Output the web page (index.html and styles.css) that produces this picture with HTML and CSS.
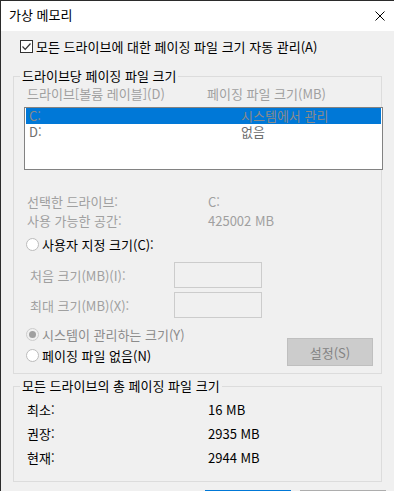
FILE: index.html
```html
<!DOCTYPE html>
<html lang="ko">
<head>
<meta charset="utf-8">
<title>가상 메모리</title>
<link rel="stylesheet" href="styles.css">
</head>
<body>
<div class="window">
  <div class="titlebar">
    <span class="title">가상 메모리</span>
    <svg class="close" width="10" height="10" viewBox="0 0 10 10"><path d="M0.5 0.5 L9.5 9.5 M9.5 0.5 L0.5 9.5" stroke="#000" stroke-width="1" fill="none"/></svg>
  </div>
  <div class="content">
    <div class="check-row">
      <span class="checkbox"><svg width="11" height="11" viewBox="0 0 11 11"><path d="M1.5 5.5 L4.2 8.3 L9.5 2.5" stroke="#333" stroke-width="1.2" fill="none"/></svg></span>
      <span class="check-label">모든 드라이브에 대한 페이징 파일 크기 자동 관리(A)</span>
    </div>

    <fieldset class="group group-drive">
      <legend>드라이브당 페이징 파일 크기</legend>
      <div class="col-headers">
        <span class="hcol1">드라이브[볼륨 레이블](D)</span>
        <span class="hcol2">페이징 파일 크기(MB)</span>
      </div>
      <div class="listbox">
        <div class="lrow selected"><span class="lcol1">C:</span><span class="lcol2">시스템에서 관리</span></div>
        <div class="lrow"><span class="lcol1">D:</span><span class="lcol2">없음</span></div>
      </div>
      <div class="info">
        <div class="info-row"><span class="info-label">선택한 드라이브:</span><span class="info-val">C:</span></div>
        <div class="info-row"><span class="info-label">사용 가능한 공간:</span><span class="info-val">425002 MB</span></div>
      </div>
      <div class="radio-row radio-custom">
        <span class="radio"></span><span class="radio-label">사용자 지정 크기(C):</span>
      </div>
      <div class="size-row size-first">
        <span class="size-label">처음 크기(MB)(I):</span><span class="input"></span>
      </div>
      <div class="size-row size-second">
        <span class="size-label">최대 크기(MB)(X):</span><span class="input"></span>
      </div>
      <div class="bottom-area">
        <div class="radios">
          <div class="radio-row"><span class="radio checked"></span><span class="radio-label disabled">시스템이 관리하는 크기(Y)</span></div>
          <div class="radio-row radio-none"><span class="radio"></span><span class="radio-label">페이징 파일 없음(N)</span></div>
        </div>
        <button class="set-btn">설정(S)</button>
      </div>
    </fieldset>

    <fieldset class="group group-total">
      <legend>모든 드라이브의 총 페이징 파일 크기</legend>
      <div class="total-row"><span class="total-label">최소:</span><span class="total-val">16 MB</span></div>
      <div class="total-row"><span class="total-label">권장:</span><span class="total-val">2935 MB</span></div>
      <div class="total-row"><span class="total-label">현재:</span><span class="total-val">2944 MB</span></div>
    </fieldset>

    <div class="footer">
      <button class="btn ok"></button>
      <button class="btn cancel"></button>
    </div>
  </div>
</div>
</body>
</html>
```

FILE: styles.css
```css
* { box-sizing: border-box; }
html, body { margin: 0; padding: 0; }
body {
  font-family: "Noto Sans CJK KR", "Noto Sans", sans-serif;
  font-size: 13px;
  color: #000;
  background: #f0f0f0;
}
.window {
  width: 394px;
  height: 491px;
  overflow: hidden;
  border-top: 1px solid #2b2b2b;
  border-left: 1px solid #2b2b2b;
  background: #f0f0f0;
}
.titlebar {
  height: 30px;
  background: #fff;
  display: flex;
  align-items: center;
  justify-content: space-between;
  padding: 0 9px 2px 8px;
}
.title { line-height: 16px; }
.close { display: block; margin-top: 2px; }

.content {
  padding-top: 9px;
}
.check-row {
  display: flex;
  align-items: center;
  height: 13px;
  margin-left: 19px;
}
.checkbox {
  width: 13px;
  height: 13px;
  border: 1px solid #333;
  background: #fff;
  display: flex;
  align-items: center;
  justify-content: center;
}
.checkbox svg { display: block; }
.check-label { margin-left: 3px; line-height: 13px; }

.group {
  margin: 15px 0 0 12px;
  width: 369px;
  border: 1px solid #dcdcdc;
  padding: 0;
  min-width: 0;
}
.group legend {
  margin-left: 6px;
  padding: 0 2px;
  line-height: 16px;
  color: #000;
}
.group-drive { padding-bottom: 7px; }

.col-headers {
  display: flex;
  line-height: 16px;
  margin-top: 2px;
  padding-left: 13px;
  color: #a0a0a0;
}
.hcol1 { width: 180px; }

.listbox {
  margin: 5px 0 0 10px;
  width: 359px;
  height: 63px;
  border: 1px solid #828282;
  background: #fff;
  padding: 0 1px;
}
.lrow {
  display: flex;
  height: 16px;
  line-height: 16px;
  padding-left: 3px;
  color: #6d6d6d;
}
.lrow.selected { background: #0078d7; color: #8a8a8a; }
.lcol1 { width: 212px; }

.info { margin-top: 22px; padding-left: 13px; color: #a0a0a0; }
.info-row { display: flex; line-height: 19px; height: 19px; }
.info-label { width: 181px; }

.radio-row {
  display: flex;
  align-items: center;
  height: 13px;
  margin-left: 12px;
}
.radio-custom { margin-top: 8px; }
.radio {
  width: 13px;
  height: 13px;
  border-radius: 50%;
  border: 1px solid #bcbcbc;
  background: #fff;
  flex: none;
  display: flex;
  align-items: center;
  justify-content: center;
}
.radio.checked { background: #f0f0f0; border-color: #cccccc; }
.radio.checked::after {
  content: "";
  width: 7px;
  height: 7px;
  border-radius: 50%;
  background: #a0a0a0;
}
.radio-label { margin-left: 3px; line-height: 13px; color: #000; }
.radio-label.disabled { color: #8c8c8c; }

.size-row {
  display: flex;
  align-items: center;
  height: 26px;
  padding-left: 16px;
  color: #a0a0a0;
}
.size-first { margin-top: 11px; }
.size-second { margin-top: 4px; }
.size-label { width: 144px; }
.input {
  width: 88px;
  height: 26px;
  border: 1px solid #cccccc;
  background: #f0f0f0;
}

.bottom-area {
  display: flex;
  margin-top: 10px;
}
.radio-none { margin-top: 8px; }
.set-btn {
  margin: 10px 8px 0 auto;
  width: 86px;
  height: 28px;
  background: #cccccc;
  border: 1px solid #bfbfbf;
  color: #838383;
  font-family: inherit;
  font-size: 13px;
  padding: 0;
}

.group-total { margin-top: 4px; padding: 4px 0 11px; }
.total-row { display: flex; line-height: 24px; height: 24px; padding-left: 13px; }
.total-label { width: 181px; }

.footer {
  display: flex;
  margin: 8px 0 0 204px;
  gap: 9px;
}
.btn {
  width: 86px;
  height: 28px;
  background: #e1e1e1;
  border: 1px solid #adadad;
  padding: 0;
}
.btn.ok { border: 2px solid #0078d7; }
```
